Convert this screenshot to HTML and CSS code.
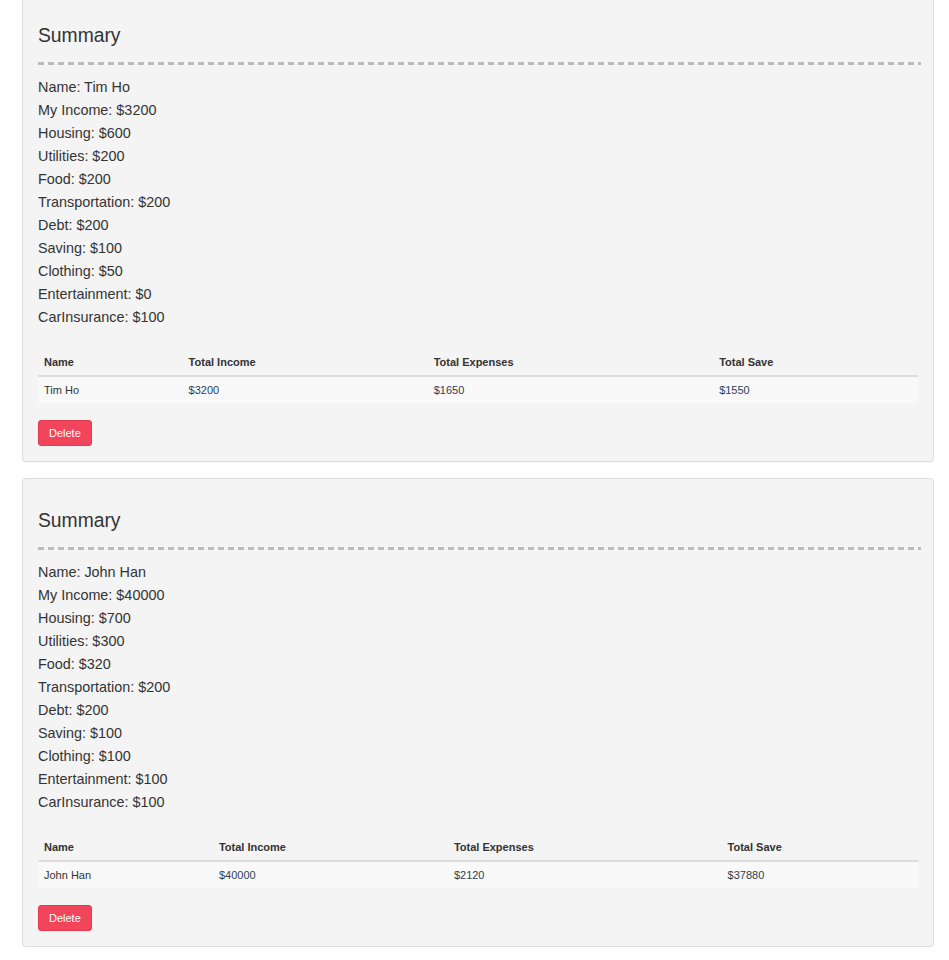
FILE: index.html
```html
<!DOCTYPE html>
<html>
<head>
<meta charset="utf-8">
<link rel="stylesheet" href="styles.css">
</head>
<body>
<div class="page">
  <div class="card first">
    <h3 class="title">Summary</h3>
    <hr class="dash">
    <div class="lines">
      <div>Name: Tim Ho</div>
      <div>My Income: $3200</div>
      <div>Housing: $600</div>
      <div>Utilities: $200</div>
      <div>Food: $200</div>
      <div>Transportation: $200</div>
      <div>Debt: $200</div>
      <div>Saving: $100</div>
      <div>Clothing: $50</div>
      <div>Entertainment: $0</div>
      <div>CarInsurance: $100</div>
    </div>
    <table class="tbl">
      <thead>
        <tr><th>Name</th><th>Total Income</th><th>Total Expenses</th><th>Total Save</th></tr>
      </thead>
      <tbody>
        <tr><td>Tim Ho</td><td class="money">$3200</td><td class="money">$1650</td><td class="money">$1550</td></tr>
      </tbody>
    </table>
    <button class="btn-delete">Delete</button>
  </div>
  <div class="card">
    <h3 class="title">Summary</h3>
    <hr class="dash">
    <div class="lines">
      <div>Name: John Han</div>
      <div>My Income: $40000</div>
      <div>Housing: $700</div>
      <div>Utilities: $300</div>
      <div>Food: $320</div>
      <div>Transportation: $200</div>
      <div>Debt: $200</div>
      <div>Saving: $100</div>
      <div>Clothing: $100</div>
      <div>Entertainment: $100</div>
      <div>CarInsurance: $100</div>
    </div>
    <table class="tbl">
      <thead>
        <tr><th>Name</th><th>Total Income</th><th>Total Expenses</th><th>Total Save</th></tr>
      </thead>
      <tbody>
        <tr><td>John Han</td><td class="money">$40000</td><td class="money">$2120</td><td class="money">$37880</td></tr>
      </tbody>
    </table>
    <button class="btn-delete">Delete</button>
  </div>
</div>
</body>
</html>
```

FILE: styles.css
```css
html, body {
  margin: 0;
  padding: 0;
  background: #ffffff;
}
body {
  font-family: "Liberation Sans", Arial, Helvetica, sans-serif;
  color: #333333;
}
.page {
  display: flex;
  flex-direction: column;
  gap: 16px;
  padding: 0 15px 0 22px;
  margin-top: -7px;
}
.card {
  background: #f4f4f4;
  border: 1px solid #dddddd;
  border-radius: 4px;
  padding: 15px;
  box-shadow: 0 1px 1px rgba(0,0,0,0.03);
}
.title {
  font-size: 19.3px;
  font-weight: normal;
  line-height: 22px;
  margin: 16px 0 15px 0;
  color: #333333;
}
.dash {
  border: 0;
  height: 3px;
  margin: 0 -3px 11px 0;
  background: repeating-linear-gradient(to right, #bbbbbb 0, #bbbbbb 6px, transparent 6px, transparent 10px);
}
.lines {
  font-size: 14.4px;
  line-height: 23px;
}
.tbl {
  width: 100%;
  border-collapse: collapse;
  margin-top: 20px;
  font-size: 11px;
}
.tbl th {
  text-align: left;
  font-weight: bold;
  line-height: 16px;
  padding: 5px 5px 5px 6px;
  border-bottom: 2px solid #dddddd;
}
.tbl td {
  line-height: 16px;
  padding: 5px 5px 5px 6px;
  background: #f9f9f9;
}
.tbl td.money {
  color: #2c3f55;
}
.btn-delete {
  display: block;
  margin-top: 17px;
  height: 26px;
  padding: 0 10px;
  font-family: "Liberation Sans", Arial, sans-serif;
  font-size: 11px;
  color: #ffffff;
  background: #f2445a;
  border: 1px solid #e33a50;
  border-radius: 3px;
}
```
